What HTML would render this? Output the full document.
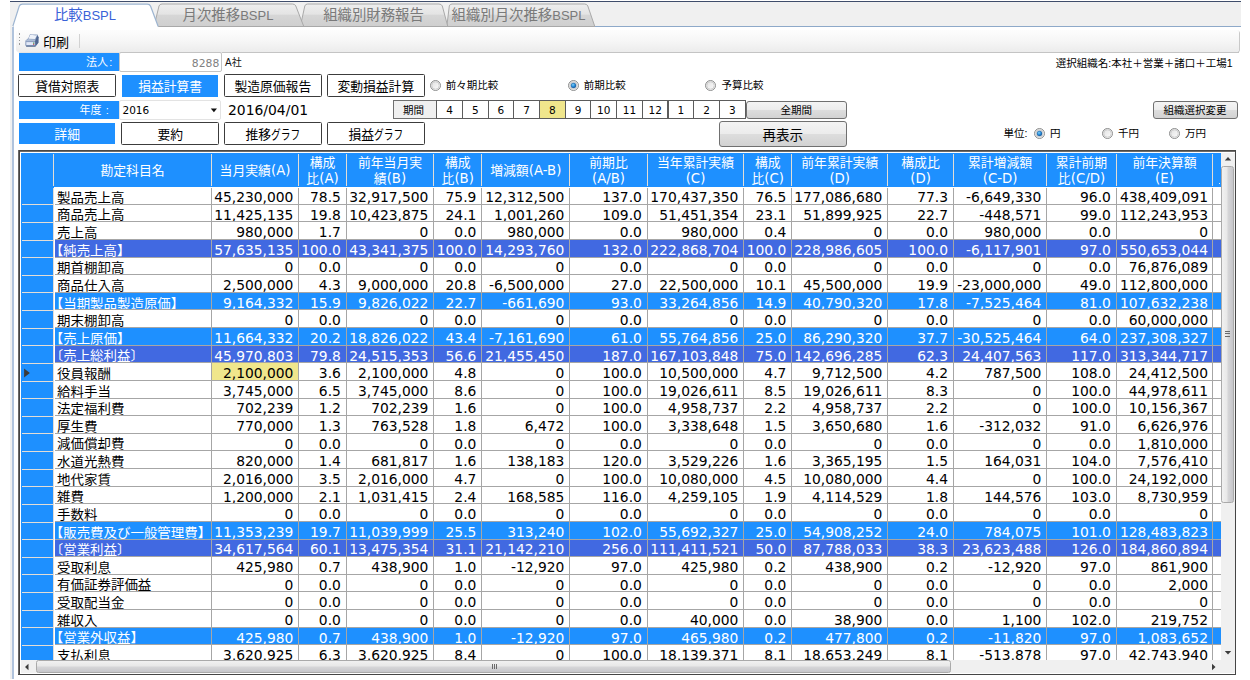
<!DOCTYPE html>
<html lang="ja"><head><meta charset="utf-8"><title>比較BSPL</title>
<style>
html,body{margin:0;padding:0;background:#fff;}
body{width:1250px;height:680px;overflow:hidden;position:relative;font-family:'Liberation Sans','Noto Sans CJK JP',sans-serif;color:#000;}
.a{position:absolute;box-sizing:border-box;}
.c{position:absolute;box-sizing:border-box;display:flex;align-items:center;justify-content:center;white-space:nowrap;}
.tab{font-size:14.4px;color:#7a7a7a;padding-bottom:2px;}
.ka{display:inline-block;transform:scaleX(0.76);transform-origin:0 50%;margin-right:-9.2px;}
.co{display:inline-block;width:0.5em;text-align:center;}
.btn{border:1px solid #3c3c3c;border-radius:1.5px;background:#fff;font-size:12.8px;}
.sel{background:#1e90ff;color:#fff;font-size:12.8px;}
.lbl{background:#1e90ff;color:#fff;font-size:11px;justify-content:flex-end;padding-right:5px;padding-bottom:1.5px;}
.s{font-size:10.5px;}
.wb{border:1px solid #707070;border-radius:3px;background:linear-gradient(#f4f4f4 0%,#ececec 48%,#dddddd 52%,#d2d2d2 100%);}
.rad{position:absolute;width:10px;height:10px;border-radius:50%;box-sizing:border-box;border:1px solid #8e8f8f;background:radial-gradient(circle at 50% 50%,#d8d8d8 0,#f4f4f4 70%);}
.rad.on::after{content:"";position:absolute;left:1.6px;top:1.6px;width:4.8px;height:4.8px;border-radius:50%;background:radial-gradient(circle at 35% 35%,#58b4ea,#10407c);}
.mc{border:1px solid #5c5c5c;background:#fff;font-family:'DejaVu Sans','Noto Sans CJK JP',sans-serif;font-size:10.5px;}
.hd{color:#fff;font-size:12.85px;line-height:16.4px;text-align:center;white-space:nowrap;padding-top:2.6px;}
.rw{position:absolute;left:55px;height:17px;}
.t{position:absolute;top:0;height:100%;box-sizing:border-box;white-space:nowrap;font-size:13.5px;line-height:17.6px;padding-top:1.8px;overflow:hidden;}
.n{font-family:'DejaVu Sans','Noto Sans CJK JP',sans-serif;font-size:13.85px;text-align:right;padding-right:5px;padding-top:2.0px;}
.k{padding-left:3px;font-size:13px;transform:scaleX(1.035);transform-origin:0 0;}
.bo{margin-left:-0.55em;}
.l{font-family:'DejaVu Sans','Noto Sans CJK JP',sans-serif;font-size:13.3px;}
.tl{font-size:13px;}
</style></head><body>

<div class="a" style="left:10px;top:1px;width:1231px;height:1px;background:#3f4d6b"></div>
<div class="a" style="left:10px;top:2px;width:1231px;height:24px;background:#f0f0f0"></div>
<div class="a" style="left:10px;top:26px;width:1231px;height:1px;background:#8ea9c9"></div>
<svg class="a" style="left:0;top:0" width="1250" height="30" viewBox="0 0 1250 30">
<defs><linearGradient id="tg" x1="0" y1="0" x2="0" y2="1"><stop offset="0" stop-color="#eeeeee"/><stop offset="0.45" stop-color="#e4e4e4"/><stop offset="0.5" stop-color="#d6d6d6"/><stop offset="1" stop-color="#cfcfcf"/></linearGradient></defs>
<path d="M446.8 26.5 L449.3 6 Q449.8 4 452 4 L584.5 4 Q587 4 587.8 6 L594.8 26.5 Z" fill="url(#tg)" stroke="#a9a9a9" stroke-width="1"/>
<path d="M300.3 26.5 L304.8 6 Q305.4 4 307.6 4 L439 4 Q441.5 4 442.3 6 L447.8 26.5 Z" fill="url(#tg)" stroke="#a9a9a9" stroke-width="1"/>
<path d="M154 26.5 L159 6 Q159.6 4 162 4 L292.5 4 Q295 4 295.8 6 L303.8 26.5 Z" fill="url(#tg)" stroke="#a9a9a9" stroke-width="1"/>
<path d="M12.9 27.5 L12.9 26 L19.2 6.2 Q20 4.1 22.5 4.1 L147.3 4.1 Q149.8 4.1 150.6 6.2 L158.2 26.5 L158.2 27.5 L12.9 27.5 Z" fill="#ffffff" stroke="none"/>
<path d="M12.9 27.5 L12.9 26 L19.2 6.2 Q20 4.1 22.5 4.1 L147.3 4.1 Q149.8 4.1 150.6 6.2 L158.2 26.5" fill="none" stroke="#9db5d1" stroke-width="1.2"/>
</svg>
<div class="c tab" style="left:20px;top:3px;width:130px;height:23px;color:#3a62d8"><span>比較<span class="tl">BSPL</span></span></div>
<div class="c tab" style="left:160px;top:3px;width:136px;height:23px;"><span>月次推移<span class="tl">BSPL</span></span></div>
<div class="c tab" style="left:306px;top:3px;width:135px;height:23px;">組織別財務報告</div>
<div class="c tab" style="left:450px;top:3px;width:137px;height:23px;">組織別<span>月次推移<span class="tl">BSPL</span></span></div>
<div class="a" style="left:10px;top:26px;width:2.5px;height:653px;background:#f0f0f0"></div>
<div class="a" style="left:12.3px;top:27px;width:1.4px;height:652px;background:#b0c3dc"></div>
<div class="a" style="left:16px;top:30px;width:1222.5px;height:21.8px;border-radius:3px;background:linear-gradient(#fdfdfd 0%,#f6f6f6 50%,#ececec 100%);box-shadow:1px 0.6px 0 #c9c9c9"></div>
<div class="a" style="left:18.8px;top:33.2px;width:1.4px;height:1.4px;background:#9a9a9a"></div>
<div class="a" style="left:18.8px;top:36.6px;width:1.4px;height:1.4px;background:#9a9a9a"></div>
<div class="a" style="left:18.8px;top:40.0px;width:1.4px;height:1.4px;background:#9a9a9a"></div>
<div class="a" style="left:18.8px;top:43.2px;width:1.4px;height:1.4px;background:#9a9a9a"></div>
<svg class="a" style="left:24px;top:33px" width="16" height="15" viewBox="0 0 16 15">
<path d="M1.4 7.8 L4.4 4.9 L6.1 1.1 L13.5 1.5 L14.5 4.2 L14.4 9.8 L11.5 13.4 L2.3 13.4 L1.3 12.3 Z" fill="#8397ba"/>
<path d="M13.3 2.2 L14.5 4.3 L14.4 9.8 L11.6 13.3 L11.2 8.2 Z" fill="#4f6690"/>
<path d="M6.3 1.4 L13.1 1.8 L11.1 6.1 L4.5 5.8 Z" fill="#eef2f9"/>
<path d="M6.9 1.4 L13.1 1.8 L12.4 3.2 Z" fill="#c3cee0"/>
<path d="M1.8 7.6 L4.3 6.1 L11.1 6.4 L10.9 8.3 L1.8 8.3 Z" fill="#aebdd6"/>
<path d="M2.3 9.1 L10.7 9.1 L10.7 12.1 L2.3 12.1 Z" fill="#e1e8f7"/>
<rect x="9.1" y="9.5" width="1.1" height="1.3" fill="#3a9a3a"/><rect x="9.1" y="10.8" width="1.1" height="1.2" fill="#d8526a"/>
<path d="M2.2 13.2 L11.5 13.2" stroke="#43597f" stroke-width="0.8" fill="none"/>
</svg>
<div class="c" style="left:42px;top:33px;width:28px;height:16px;font-size:13px;">印刷</div>
<div class="a" style="left:78.5px;top:34px;width:1px;height:14px;background:#d2d2d2"></div>
<div class="c lbl" style="left:19px;top:52.6px;width:99.5px;height:18.4px;"><span>法人<span class="co">:</span></span></div>
<div class="c s" style="left:119px;top:52px;width:102.5px;height:19.5px;border:1px solid #c4c4c4;border-radius:2px;background:#fff;justify-content:flex-end;padding-right:1.2px;padding-top:3.4px;color:#808080;font-size:10.8px;font-family:'DejaVu Sans','Noto Sans CJK JP',sans-serif">8288</div>
<div class="a" style="left:221.5px;top:52px;width:1017px;height:1px;background:#c4c4c4"></div>
<div class="c s" style="left:225px;top:53px;width:40px;height:17px;justify-content:flex-start;font-size:10px;color:#111">A社</div>
<div class="c s" style="left:1000px;top:53.5px;width:1232.5px;height:17px;width:232.5px;justify-content:flex-end;">選択組織名:本社＋営業＋諸口＋工場1</div>
<div class="c btn" style="left:18.3px;top:74px;width:97.8px;height:23.4px;">貸借対照表</div>
<div class="c sel" style="left:122.3px;top:75px;width:95.7px;height:21.5px;">損益計算書</div>
<div class="c btn" style="left:223.8px;top:74px;width:98px;height:23.4px;">製造原価報告</div>
<div class="c btn" style="left:326.8px;top:74px;width:98px;height:23.4px;">変動損益計算</div>
<svg width="0" height="0" style="position:absolute"><defs><linearGradient id="rb" x1="0" y1="0" x2="1" y2="1"><stop offset="0" stop-color="#dedede"/><stop offset="1" stop-color="#ffffff"/></linearGradient><radialGradient id="rd" cx="0.4" cy="0.35" r="0.7"><stop offset="0" stop-color="#7fd0f8"/><stop offset="0.5" stop-color="#2a90dc"/><stop offset="1" stop-color="#0f4f96"/></radialGradient></defs></svg>
<svg class="a" style="left:428.6px;top:79.0px" width="13" height="13" viewBox="0 0 13 13"><circle cx="6.5" cy="6.5" r="5" fill="url(#rb)" stroke="#8e8f8f" stroke-width="1"/><circle cx="6.5" cy="6.5" r="3.7" fill="none" stroke="#c9c9c9" stroke-width="0.8"/></svg>
<div class="c s" style="left:445.7px;top:77.2px;height:14px;justify-content:flex-start;">前々期比較</div>
<svg class="a" style="left:566.6px;top:79.0px" width="13" height="13" viewBox="0 0 13 13"><circle cx="6.5" cy="6.5" r="5" fill="url(#rb)" stroke="#8e8f8f" stroke-width="1"/><circle cx="6.5" cy="6.5" r="3.7" fill="none" stroke="#c9c9c9" stroke-width="0.8"/><circle cx="6.5" cy="6.5" r="2.5" fill="url(#rd)" stroke="#1c5a96" stroke-width="0.5"/></svg>
<div class="c s" style="left:583.7px;top:77.2px;height:14px;justify-content:flex-start;">前期比較</div>
<svg class="a" style="left:704.4px;top:79.0px" width="13" height="13" viewBox="0 0 13 13"><circle cx="6.5" cy="6.5" r="5" fill="url(#rb)" stroke="#8e8f8f" stroke-width="1"/><circle cx="6.5" cy="6.5" r="3.7" fill="none" stroke="#c9c9c9" stroke-width="0.8"/></svg>
<div class="c s" style="left:721.5px;top:77.2px;height:14px;justify-content:flex-start;">予算比較</div>
<div class="c lbl" style="left:19px;top:100.5px;width:99.5px;height:18.4px;padding-right:8.5px"><span>年度&nbsp;<span class="co">:</span></span></div>
<div class="c s" style="left:119px;top:100px;width:102px;height:20px;border:1px solid #e3e3e3;border-radius:2px;background:#fff;justify-content:flex-start;padding-left:2.5px;font-family:'DejaVu Sans','Noto Sans CJK JP',sans-serif">2016</div>
<svg class="a" style="left:210px;top:108px" width="8" height="5" viewBox="0 0 8 5"><path d="M0.8 0.6 L7 0.6 L3.9 4.2 Z" fill="#111"/></svg>
<div class="c" style="left:228px;top:100.4px;width:84px;height:19px;justify-content:flex-start;font-family:'DejaVu Sans','Noto Sans CJK JP',sans-serif;font-size:13.9px;">2016/04/01</div>
<div class="c s" style="left:393.2px;top:100.4px;width:43.6px;height:18.6px;border:1px solid #707070;background:#f0f0f0;padding-right:2.8px;">期間</div>
<div class="c mc" style="left:436.2px;top:100.2px;width:26.7px;height:18.9px;background:#fff">4</div>
<div class="c mc" style="left:461.9px;top:100.2px;width:26.7px;height:18.9px;background:#fff">5</div>
<div class="c mc" style="left:487.6px;top:100.2px;width:26.7px;height:18.9px;background:#fff">6</div>
<div class="c mc" style="left:513.3px;top:100.2px;width:26.7px;height:18.9px;background:#fff">7</div>
<div class="c mc" style="left:539.0px;top:100.2px;width:26.7px;height:18.9px;background:#f0e68c">8</div>
<div class="c mc" style="left:564.7px;top:100.2px;width:26.7px;height:18.9px;background:#fff">9</div>
<div class="c mc" style="left:590.4px;top:100.2px;width:26.7px;height:18.9px;background:#fff">10</div>
<div class="c mc" style="left:616.1px;top:100.2px;width:26.7px;height:18.9px;background:#fff">11</div>
<div class="c mc" style="left:641.8px;top:100.2px;width:26.7px;height:18.9px;background:#fff">12</div>
<div class="c mc" style="left:667.5px;top:100.2px;width:26.7px;height:18.9px;background:#fff">1</div>
<div class="c mc" style="left:693.2px;top:100.2px;width:26.7px;height:18.9px;background:#fff">2</div>
<div class="c mc" style="left:718.9px;top:100.2px;width:26.7px;height:18.9px;background:#fff">3</div>
<div class="c s wb" style="left:746px;top:101px;width:100.6px;height:17.5px;">全期間</div>
<div class="c s wb" style="left:1152.6px;top:101px;width:85px;height:17.5px;">組織選択変更</div>
<div class="c sel" style="left:19.3px;top:123px;width:95.7px;height:21.3px;">詳細</div>
<div class="c btn" style="left:121.3px;top:122px;width:97.8px;height:23px;">要約</div>
<div class="c btn" style="left:223.8px;top:122px;width:98px;height:23px;"><span>推移<span class="ka">グラフ</span></span></div>
<div class="c btn" style="left:326.8px;top:122px;width:98px;height:23px;"><span>損益<span class="ka">グラフ</span></span></div>
<div class="c wb" style="left:719px;top:120.5px;width:127.6px;height:26px;font-size:13.5px;">再表示</div>
<div class="c s" style="left:1003.5px;top:125.8px;width:26px;height:14px;justify-content:flex-start;">単位:</div>
<svg class="a" style="left:1032.8px;top:126.8px" width="13" height="13" viewBox="0 0 13 13"><circle cx="6.5" cy="6.5" r="5" fill="url(#rb)" stroke="#8e8f8f" stroke-width="1"/><circle cx="6.5" cy="6.5" r="3.7" fill="none" stroke="#c9c9c9" stroke-width="0.8"/><circle cx="6.5" cy="6.5" r="2.5" fill="url(#rd)" stroke="#1c5a96" stroke-width="0.5"/></svg>
<div class="c s" style="left:1049.9px;top:125.0px;height:14px;justify-content:flex-start;">円</div>
<svg class="a" style="left:1100.8px;top:126.8px" width="13" height="13" viewBox="0 0 13 13"><circle cx="6.5" cy="6.5" r="5" fill="url(#rb)" stroke="#8e8f8f" stroke-width="1"/><circle cx="6.5" cy="6.5" r="3.7" fill="none" stroke="#c9c9c9" stroke-width="0.8"/></svg>
<div class="c s" style="left:1117.9px;top:125.0px;height:14px;justify-content:flex-start;">千円</div>
<svg class="a" style="left:1168.0px;top:126.8px" width="13" height="13" viewBox="0 0 13 13"><circle cx="6.5" cy="6.5" r="5" fill="url(#rb)" stroke="#8e8f8f" stroke-width="1"/><circle cx="6.5" cy="6.5" r="3.7" fill="none" stroke="#c9c9c9" stroke-width="0.8"/></svg>
<div class="c s" style="left:1185.1px;top:125.0px;height:14px;justify-content:flex-start;">万円</div>
<div class="a" style="left:18px;top:150px;width:1218px;height:525px;background:#fff"></div>
<div class="a" style="left:18px;top:150px;width:1218px;height:1px;background:#4a4846"></div>
<div class="a" style="left:18px;top:151px;width:1218px;height:1px;background:#6f6d6b"></div>
<div class="a" style="left:18px;top:150px;width:1px;height:525px;background:#6a6866"></div>
<div class="a" style="left:19px;top:150px;width:1px;height:525px;background:#454341"></div>
<div class="a" style="left:1235px;top:150px;width:1px;height:525px;background:#454545"></div>
<div class="a" style="left:18px;top:674px;width:1218px;height:1px;background:#454545"></div>
<div class="a" style="left:21px;top:153px;width:1199.5px;height:34px;background:#1e90ff"></div>
<div class="a" style="left:21px;top:153px;width:33px;height:507px;background:#1e90ff"></div>
<div class="c hd" style="left:54.0px;top:153px;width:157.0px;height:34px;"><div>勘定科目名</div></div>
<div class="c hd" style="left:211.5px;top:153px;width:87.0px;height:34px;"><div>当月実績<span class="l">(A)</span></div></div>
<div class="c hd" style="left:299.0px;top:153px;width:47.0px;height:34px;"><div>構成<br>比<span class="l">(A)</span></div></div>
<div class="c hd" style="left:346.5px;top:153px;width:87.0px;height:34px;"><div>前年当月実<br>績<span class="l">(B)</span></div></div>
<div class="c hd" style="left:434.0px;top:153px;width:47.5px;height:34px;"><div>構成<br>比<span class="l">(B)</span></div></div>
<div class="c hd" style="left:482.0px;top:153px;width:87.5px;height:34px;"><div>増減額<span class="l">(A-B)</span></div></div>
<div class="c hd" style="left:570.0px;top:153px;width:77.0px;height:34px;"><div>前期比<br><span class="l">(A/B)</span></div></div>
<div class="c hd" style="left:647.5px;top:153px;width:96.0px;height:34px;"><div>当年累計実績<br><span class="l">(C)</span></div></div>
<div class="c hd" style="left:744.0px;top:153px;width:47.5px;height:34px;"><div>構成<br>比<span class="l">(C)</span></div></div>
<div class="c hd" style="left:792.0px;top:153px;width:95.5px;height:34px;"><div>前年累計実績<br><span class="l">(D)</span></div></div>
<div class="c hd" style="left:888.0px;top:153px;width:65.1px;height:34px;"><div>構成比<br><span class="l">(D)</span></div></div>
<div class="c hd" style="left:953.6px;top:153px;width:92.9px;height:34px;"><div>累計増減額<br><span class="l">(C-D)</span></div></div>
<div class="c hd" style="left:1047.0px;top:153px;width:69.0px;height:34px;"><div>累計前期<br>比<span class="l">(C/D)</span></div></div>
<div class="c hd" style="left:1116.5px;top:153px;width:96.0px;height:34px;"><div>前年決算額<br><span class="l">(E)</span></div></div>
<div class="a" style="left:53.3px;top:154px;width:1.2px;height:32px;background:#e3ddd6"></div>
<div class="a" style="left:210.8px;top:154px;width:1.2px;height:32px;background:#e3ddd6"></div>
<div class="a" style="left:298.3px;top:154px;width:1.2px;height:32px;background:#e3ddd6"></div>
<div class="a" style="left:345.8px;top:154px;width:1.2px;height:32px;background:#e3ddd6"></div>
<div class="a" style="left:433.3px;top:154px;width:1.2px;height:32px;background:#e3ddd6"></div>
<div class="a" style="left:481.3px;top:154px;width:1.2px;height:32px;background:#e3ddd6"></div>
<div class="a" style="left:569.3px;top:154px;width:1.2px;height:32px;background:#e3ddd6"></div>
<div class="a" style="left:646.8px;top:154px;width:1.2px;height:32px;background:#e3ddd6"></div>
<div class="a" style="left:743.3px;top:154px;width:1.2px;height:32px;background:#e3ddd6"></div>
<div class="a" style="left:791.3px;top:154px;width:1.2px;height:32px;background:#e3ddd6"></div>
<div class="a" style="left:887.3px;top:154px;width:1.2px;height:32px;background:#e3ddd6"></div>
<div class="a" style="left:952.9px;top:154px;width:1.2px;height:32px;background:#e3ddd6"></div>
<div class="a" style="left:1046.3px;top:154px;width:1.2px;height:32px;background:#e3ddd6"></div>
<div class="a" style="left:1115.8px;top:154px;width:1.2px;height:32px;background:#e3ddd6"></div>
<div class="a" style="left:1212.3px;top:154px;width:1.2px;height:32px;background:#e3ddd6"></div>
<div class="rw" style="top:187.00px;width:1165.5px;height:16.74px;background:#fff;color:#000">
<div class="t k" style="left:-0.6px;width:156.5px">製品売上高</div>
<div class="t n" style="left:156.9px;width:86.5px;">45,230,000</div>
<div class="t n" style="left:244.4px;width:46.5px;">78.5</div>
<div class="t n" style="left:291.9px;width:86.5px;">32,917,500</div>
<div class="t n" style="left:379.4px;width:47.0px;">75.9</div>
<div class="t n" style="left:427.4px;width:87.0px;">12,312,500</div>
<div class="t n" style="left:515.4px;width:76.5px;">137.0</div>
<div class="t n" style="left:592.9px;width:95.5px;">170,437,350</div>
<div class="t n" style="left:689.4px;width:47.0px;">76.5</div>
<div class="t n" style="left:737.4px;width:95.0px;">177,086,680</div>
<div class="t n" style="left:833.4px;width:64.6px;">77.3</div>
<div class="t n" style="left:899.0px;width:92.4px;">-6,649,330</div>
<div class="t n" style="left:992.4px;width:68.5px;">96.0</div>
<div class="t n" style="left:1061.9px;width:96.1px;">438,409,091</div>
</div>
<div class="rw" style="top:204.62px;width:1165.5px;height:16.74px;background:#fff;color:#000">
<div class="t k" style="left:-0.6px;width:156.5px">商品売上高</div>
<div class="t n" style="left:156.9px;width:86.5px;">11,425,135</div>
<div class="t n" style="left:244.4px;width:46.5px;">19.8</div>
<div class="t n" style="left:291.9px;width:86.5px;">10,423,875</div>
<div class="t n" style="left:379.4px;width:47.0px;">24.1</div>
<div class="t n" style="left:427.4px;width:87.0px;">1,001,260</div>
<div class="t n" style="left:515.4px;width:76.5px;">109.0</div>
<div class="t n" style="left:592.9px;width:95.5px;">51,451,354</div>
<div class="t n" style="left:689.4px;width:47.0px;">23.1</div>
<div class="t n" style="left:737.4px;width:95.0px;">51,899,925</div>
<div class="t n" style="left:833.4px;width:64.6px;">22.7</div>
<div class="t n" style="left:899.0px;width:92.4px;">-448,571</div>
<div class="t n" style="left:992.4px;width:68.5px;">99.0</div>
<div class="t n" style="left:1061.9px;width:96.1px;">112,243,953</div>
</div>
<div class="rw" style="top:222.24px;width:1165.5px;height:16.74px;background:#fff;color:#000">
<div class="t k" style="left:-0.6px;width:156.5px">売上高</div>
<div class="t n" style="left:156.9px;width:86.5px;">980,000</div>
<div class="t n" style="left:244.4px;width:46.5px;">1.7</div>
<div class="t n" style="left:291.9px;width:86.5px;">0</div>
<div class="t n" style="left:379.4px;width:47.0px;">0.0</div>
<div class="t n" style="left:427.4px;width:87.0px;">980,000</div>
<div class="t n" style="left:515.4px;width:76.5px;">0.0</div>
<div class="t n" style="left:592.9px;width:95.5px;">980,000</div>
<div class="t n" style="left:689.4px;width:47.0px;">0.4</div>
<div class="t n" style="left:737.4px;width:95.0px;">0</div>
<div class="t n" style="left:833.4px;width:64.6px;">0.0</div>
<div class="t n" style="left:899.0px;width:92.4px;">980,000</div>
<div class="t n" style="left:992.4px;width:68.5px;">0.0</div>
<div class="t n" style="left:1061.9px;width:96.1px;">0</div>
</div>
<div class="rw" style="top:239.86px;width:1165.5px;height:16.74px;background:#4169e1;color:#fff">
<div class="t k" style="left:-0.6px;width:156.5px"><span class="bo">【</span>純売上高】</div>
<div class="t n" style="left:156.9px;width:86.5px;">57,635,135</div>
<div class="t n" style="left:244.4px;width:46.5px;">100.0</div>
<div class="t n" style="left:291.9px;width:86.5px;">43,341,375</div>
<div class="t n" style="left:379.4px;width:47.0px;">100.0</div>
<div class="t n" style="left:427.4px;width:87.0px;">14,293,760</div>
<div class="t n" style="left:515.4px;width:76.5px;">132.0</div>
<div class="t n" style="left:592.9px;width:95.5px;">222,868,704</div>
<div class="t n" style="left:689.4px;width:47.0px;">100.0</div>
<div class="t n" style="left:737.4px;width:95.0px;">228,986,605</div>
<div class="t n" style="left:833.4px;width:64.6px;">100.0</div>
<div class="t n" style="left:899.0px;width:92.4px;">-6,117,901</div>
<div class="t n" style="left:992.4px;width:68.5px;">97.0</div>
<div class="t n" style="left:1061.9px;width:96.1px;">550,653,044</div>
</div>
<div class="rw" style="top:257.48px;width:1165.5px;height:16.74px;background:#fff;color:#000">
<div class="t k" style="left:-0.6px;width:156.5px">期首棚卸高</div>
<div class="t n" style="left:156.9px;width:86.5px;">0</div>
<div class="t n" style="left:244.4px;width:46.5px;">0.0</div>
<div class="t n" style="left:291.9px;width:86.5px;">0</div>
<div class="t n" style="left:379.4px;width:47.0px;">0.0</div>
<div class="t n" style="left:427.4px;width:87.0px;">0</div>
<div class="t n" style="left:515.4px;width:76.5px;">0.0</div>
<div class="t n" style="left:592.9px;width:95.5px;">0</div>
<div class="t n" style="left:689.4px;width:47.0px;">0.0</div>
<div class="t n" style="left:737.4px;width:95.0px;">0</div>
<div class="t n" style="left:833.4px;width:64.6px;">0.0</div>
<div class="t n" style="left:899.0px;width:92.4px;">0</div>
<div class="t n" style="left:992.4px;width:68.5px;">0.0</div>
<div class="t n" style="left:1061.9px;width:96.1px;">76,876,089</div>
</div>
<div class="rw" style="top:275.10px;width:1165.5px;height:16.74px;background:#fff;color:#000">
<div class="t k" style="left:-0.6px;width:156.5px">商品仕入高</div>
<div class="t n" style="left:156.9px;width:86.5px;">2,500,000</div>
<div class="t n" style="left:244.4px;width:46.5px;">4.3</div>
<div class="t n" style="left:291.9px;width:86.5px;">9,000,000</div>
<div class="t n" style="left:379.4px;width:47.0px;">20.8</div>
<div class="t n" style="left:427.4px;width:87.0px;">-6,500,000</div>
<div class="t n" style="left:515.4px;width:76.5px;">27.0</div>
<div class="t n" style="left:592.9px;width:95.5px;">22,500,000</div>
<div class="t n" style="left:689.4px;width:47.0px;">10.1</div>
<div class="t n" style="left:737.4px;width:95.0px;">45,500,000</div>
<div class="t n" style="left:833.4px;width:64.6px;">19.9</div>
<div class="t n" style="left:899.0px;width:92.4px;">-23,000,000</div>
<div class="t n" style="left:992.4px;width:68.5px;">49.0</div>
<div class="t n" style="left:1061.9px;width:96.1px;">112,800,000</div>
</div>
<div class="rw" style="top:292.72px;width:1165.5px;height:16.74px;background:#1e90ff;color:#fff">
<div class="t k" style="left:-0.6px;width:156.5px"><span class="bo">【</span>当期製品製造原価】</div>
<div class="t n" style="left:156.9px;width:86.5px;">9,164,332</div>
<div class="t n" style="left:244.4px;width:46.5px;">15.9</div>
<div class="t n" style="left:291.9px;width:86.5px;">9,826,022</div>
<div class="t n" style="left:379.4px;width:47.0px;">22.7</div>
<div class="t n" style="left:427.4px;width:87.0px;">-661,690</div>
<div class="t n" style="left:515.4px;width:76.5px;">93.0</div>
<div class="t n" style="left:592.9px;width:95.5px;">33,264,856</div>
<div class="t n" style="left:689.4px;width:47.0px;">14.9</div>
<div class="t n" style="left:737.4px;width:95.0px;">40,790,320</div>
<div class="t n" style="left:833.4px;width:64.6px;">17.8</div>
<div class="t n" style="left:899.0px;width:92.4px;">-7,525,464</div>
<div class="t n" style="left:992.4px;width:68.5px;">81.0</div>
<div class="t n" style="left:1061.9px;width:96.1px;">107,632,238</div>
</div>
<div class="rw" style="top:310.34px;width:1165.5px;height:16.74px;background:#fff;color:#000">
<div class="t k" style="left:-0.6px;width:156.5px">期末棚卸高</div>
<div class="t n" style="left:156.9px;width:86.5px;">0</div>
<div class="t n" style="left:244.4px;width:46.5px;">0.0</div>
<div class="t n" style="left:291.9px;width:86.5px;">0</div>
<div class="t n" style="left:379.4px;width:47.0px;">0.0</div>
<div class="t n" style="left:427.4px;width:87.0px;">0</div>
<div class="t n" style="left:515.4px;width:76.5px;">0.0</div>
<div class="t n" style="left:592.9px;width:95.5px;">0</div>
<div class="t n" style="left:689.4px;width:47.0px;">0.0</div>
<div class="t n" style="left:737.4px;width:95.0px;">0</div>
<div class="t n" style="left:833.4px;width:64.6px;">0.0</div>
<div class="t n" style="left:899.0px;width:92.4px;">0</div>
<div class="t n" style="left:992.4px;width:68.5px;">0.0</div>
<div class="t n" style="left:1061.9px;width:96.1px;">60,000,000</div>
</div>
<div class="rw" style="top:327.96px;width:1165.5px;height:16.74px;background:#1e90ff;color:#fff">
<div class="t k" style="left:-0.6px;width:156.5px"><span class="bo">【</span>売上原価】</div>
<div class="t n" style="left:156.9px;width:86.5px;">11,664,332</div>
<div class="t n" style="left:244.4px;width:46.5px;">20.2</div>
<div class="t n" style="left:291.9px;width:86.5px;">18,826,022</div>
<div class="t n" style="left:379.4px;width:47.0px;">43.4</div>
<div class="t n" style="left:427.4px;width:87.0px;">-7,161,690</div>
<div class="t n" style="left:515.4px;width:76.5px;">61.0</div>
<div class="t n" style="left:592.9px;width:95.5px;">55,764,856</div>
<div class="t n" style="left:689.4px;width:47.0px;">25.0</div>
<div class="t n" style="left:737.4px;width:95.0px;">86,290,320</div>
<div class="t n" style="left:833.4px;width:64.6px;">37.7</div>
<div class="t n" style="left:899.0px;width:92.4px;">-30,525,464</div>
<div class="t n" style="left:992.4px;width:68.5px;">64.0</div>
<div class="t n" style="left:1061.9px;width:96.1px;">237,308,327</div>
</div>
<div class="rw" style="top:345.58px;width:1165.5px;height:16.74px;background:#4169e1;color:#fff">
<div class="t k" style="left:-0.6px;width:156.5px"><span class="bo">〔</span>売上総利益〕</div>
<div class="t n" style="left:156.9px;width:86.5px;">45,970,803</div>
<div class="t n" style="left:244.4px;width:46.5px;">79.8</div>
<div class="t n" style="left:291.9px;width:86.5px;">24,515,353</div>
<div class="t n" style="left:379.4px;width:47.0px;">56.6</div>
<div class="t n" style="left:427.4px;width:87.0px;">21,455,450</div>
<div class="t n" style="left:515.4px;width:76.5px;">187.0</div>
<div class="t n" style="left:592.9px;width:95.5px;">167,103,848</div>
<div class="t n" style="left:689.4px;width:47.0px;">75.0</div>
<div class="t n" style="left:737.4px;width:95.0px;">142,696,285</div>
<div class="t n" style="left:833.4px;width:64.6px;">62.3</div>
<div class="t n" style="left:899.0px;width:92.4px;">24,407,563</div>
<div class="t n" style="left:992.4px;width:68.5px;">117.0</div>
<div class="t n" style="left:1061.9px;width:96.1px;">313,344,717</div>
</div>
<div class="rw" style="top:363.20px;width:1165.5px;height:16.74px;background:#fff;color:#000">
<div class="t k" style="left:-0.6px;width:156.5px">役員報酬</div>
<div class="t n" style="left:156.9px;width:86.5px;background:#f0e68c;">2,100,000</div>
<div class="t n" style="left:244.4px;width:46.5px;">3.6</div>
<div class="t n" style="left:291.9px;width:86.5px;">2,100,000</div>
<div class="t n" style="left:379.4px;width:47.0px;">4.8</div>
<div class="t n" style="left:427.4px;width:87.0px;">0</div>
<div class="t n" style="left:515.4px;width:76.5px;">100.0</div>
<div class="t n" style="left:592.9px;width:95.5px;">10,500,000</div>
<div class="t n" style="left:689.4px;width:47.0px;">4.7</div>
<div class="t n" style="left:737.4px;width:95.0px;">9,712,500</div>
<div class="t n" style="left:833.4px;width:64.6px;">4.2</div>
<div class="t n" style="left:899.0px;width:92.4px;">787,500</div>
<div class="t n" style="left:992.4px;width:68.5px;">108.0</div>
<div class="t n" style="left:1061.9px;width:96.1px;">24,412,500</div>
</div>
<div class="rw" style="top:380.82px;width:1165.5px;height:16.74px;background:#fff;color:#000">
<div class="t k" style="left:-0.6px;width:156.5px">給料手当</div>
<div class="t n" style="left:156.9px;width:86.5px;">3,745,000</div>
<div class="t n" style="left:244.4px;width:46.5px;">6.5</div>
<div class="t n" style="left:291.9px;width:86.5px;">3,745,000</div>
<div class="t n" style="left:379.4px;width:47.0px;">8.6</div>
<div class="t n" style="left:427.4px;width:87.0px;">0</div>
<div class="t n" style="left:515.4px;width:76.5px;">100.0</div>
<div class="t n" style="left:592.9px;width:95.5px;">19,026,611</div>
<div class="t n" style="left:689.4px;width:47.0px;">8.5</div>
<div class="t n" style="left:737.4px;width:95.0px;">19,026,611</div>
<div class="t n" style="left:833.4px;width:64.6px;">8.3</div>
<div class="t n" style="left:899.0px;width:92.4px;">0</div>
<div class="t n" style="left:992.4px;width:68.5px;">100.0</div>
<div class="t n" style="left:1061.9px;width:96.1px;">44,978,611</div>
</div>
<div class="rw" style="top:398.44px;width:1165.5px;height:16.74px;background:#fff;color:#000">
<div class="t k" style="left:-0.6px;width:156.5px">法定福利費</div>
<div class="t n" style="left:156.9px;width:86.5px;">702,239</div>
<div class="t n" style="left:244.4px;width:46.5px;">1.2</div>
<div class="t n" style="left:291.9px;width:86.5px;">702,239</div>
<div class="t n" style="left:379.4px;width:47.0px;">1.6</div>
<div class="t n" style="left:427.4px;width:87.0px;">0</div>
<div class="t n" style="left:515.4px;width:76.5px;">100.0</div>
<div class="t n" style="left:592.9px;width:95.5px;">4,958,737</div>
<div class="t n" style="left:689.4px;width:47.0px;">2.2</div>
<div class="t n" style="left:737.4px;width:95.0px;">4,958,737</div>
<div class="t n" style="left:833.4px;width:64.6px;">2.2</div>
<div class="t n" style="left:899.0px;width:92.4px;">0</div>
<div class="t n" style="left:992.4px;width:68.5px;">100.0</div>
<div class="t n" style="left:1061.9px;width:96.1px;">10,156,367</div>
</div>
<div class="rw" style="top:416.06px;width:1165.5px;height:16.74px;background:#fff;color:#000">
<div class="t k" style="left:-0.6px;width:156.5px">厚生費</div>
<div class="t n" style="left:156.9px;width:86.5px;">770,000</div>
<div class="t n" style="left:244.4px;width:46.5px;">1.3</div>
<div class="t n" style="left:291.9px;width:86.5px;">763,528</div>
<div class="t n" style="left:379.4px;width:47.0px;">1.8</div>
<div class="t n" style="left:427.4px;width:87.0px;">6,472</div>
<div class="t n" style="left:515.4px;width:76.5px;">100.0</div>
<div class="t n" style="left:592.9px;width:95.5px;">3,338,648</div>
<div class="t n" style="left:689.4px;width:47.0px;">1.5</div>
<div class="t n" style="left:737.4px;width:95.0px;">3,650,680</div>
<div class="t n" style="left:833.4px;width:64.6px;">1.6</div>
<div class="t n" style="left:899.0px;width:92.4px;">-312,032</div>
<div class="t n" style="left:992.4px;width:68.5px;">91.0</div>
<div class="t n" style="left:1061.9px;width:96.1px;">6,626,976</div>
</div>
<div class="rw" style="top:433.68px;width:1165.5px;height:16.74px;background:#fff;color:#000">
<div class="t k" style="left:-0.6px;width:156.5px">減価償却費</div>
<div class="t n" style="left:156.9px;width:86.5px;">0</div>
<div class="t n" style="left:244.4px;width:46.5px;">0.0</div>
<div class="t n" style="left:291.9px;width:86.5px;">0</div>
<div class="t n" style="left:379.4px;width:47.0px;">0.0</div>
<div class="t n" style="left:427.4px;width:87.0px;">0</div>
<div class="t n" style="left:515.4px;width:76.5px;">0.0</div>
<div class="t n" style="left:592.9px;width:95.5px;">0</div>
<div class="t n" style="left:689.4px;width:47.0px;">0.0</div>
<div class="t n" style="left:737.4px;width:95.0px;">0</div>
<div class="t n" style="left:833.4px;width:64.6px;">0.0</div>
<div class="t n" style="left:899.0px;width:92.4px;">0</div>
<div class="t n" style="left:992.4px;width:68.5px;">0.0</div>
<div class="t n" style="left:1061.9px;width:96.1px;">1,810,000</div>
</div>
<div class="rw" style="top:451.30px;width:1165.5px;height:16.74px;background:#fff;color:#000">
<div class="t k" style="left:-0.6px;width:156.5px">水道光熱費</div>
<div class="t n" style="left:156.9px;width:86.5px;">820,000</div>
<div class="t n" style="left:244.4px;width:46.5px;">1.4</div>
<div class="t n" style="left:291.9px;width:86.5px;">681,817</div>
<div class="t n" style="left:379.4px;width:47.0px;">1.6</div>
<div class="t n" style="left:427.4px;width:87.0px;">138,183</div>
<div class="t n" style="left:515.4px;width:76.5px;">120.0</div>
<div class="t n" style="left:592.9px;width:95.5px;">3,529,226</div>
<div class="t n" style="left:689.4px;width:47.0px;">1.6</div>
<div class="t n" style="left:737.4px;width:95.0px;">3,365,195</div>
<div class="t n" style="left:833.4px;width:64.6px;">1.5</div>
<div class="t n" style="left:899.0px;width:92.4px;">164,031</div>
<div class="t n" style="left:992.4px;width:68.5px;">104.0</div>
<div class="t n" style="left:1061.9px;width:96.1px;">7,576,410</div>
</div>
<div class="rw" style="top:468.92px;width:1165.5px;height:16.74px;background:#fff;color:#000">
<div class="t k" style="left:-0.6px;width:156.5px">地代家賃</div>
<div class="t n" style="left:156.9px;width:86.5px;">2,016,000</div>
<div class="t n" style="left:244.4px;width:46.5px;">3.5</div>
<div class="t n" style="left:291.9px;width:86.5px;">2,016,000</div>
<div class="t n" style="left:379.4px;width:47.0px;">4.7</div>
<div class="t n" style="left:427.4px;width:87.0px;">0</div>
<div class="t n" style="left:515.4px;width:76.5px;">100.0</div>
<div class="t n" style="left:592.9px;width:95.5px;">10,080,000</div>
<div class="t n" style="left:689.4px;width:47.0px;">4.5</div>
<div class="t n" style="left:737.4px;width:95.0px;">10,080,000</div>
<div class="t n" style="left:833.4px;width:64.6px;">4.4</div>
<div class="t n" style="left:899.0px;width:92.4px;">0</div>
<div class="t n" style="left:992.4px;width:68.5px;">100.0</div>
<div class="t n" style="left:1061.9px;width:96.1px;">24,192,000</div>
</div>
<div class="rw" style="top:486.54px;width:1165.5px;height:16.74px;background:#fff;color:#000">
<div class="t k" style="left:-0.6px;width:156.5px">雑費</div>
<div class="t n" style="left:156.9px;width:86.5px;">1,200,000</div>
<div class="t n" style="left:244.4px;width:46.5px;">2.1</div>
<div class="t n" style="left:291.9px;width:86.5px;">1,031,415</div>
<div class="t n" style="left:379.4px;width:47.0px;">2.4</div>
<div class="t n" style="left:427.4px;width:87.0px;">168,585</div>
<div class="t n" style="left:515.4px;width:76.5px;">116.0</div>
<div class="t n" style="left:592.9px;width:95.5px;">4,259,105</div>
<div class="t n" style="left:689.4px;width:47.0px;">1.9</div>
<div class="t n" style="left:737.4px;width:95.0px;">4,114,529</div>
<div class="t n" style="left:833.4px;width:64.6px;">1.8</div>
<div class="t n" style="left:899.0px;width:92.4px;">144,576</div>
<div class="t n" style="left:992.4px;width:68.5px;">103.0</div>
<div class="t n" style="left:1061.9px;width:96.1px;">8,730,959</div>
</div>
<div class="rw" style="top:504.16px;width:1165.5px;height:16.74px;background:#fff;color:#000">
<div class="t k" style="left:-0.6px;width:156.5px">手数料</div>
<div class="t n" style="left:156.9px;width:86.5px;">0</div>
<div class="t n" style="left:244.4px;width:46.5px;">0.0</div>
<div class="t n" style="left:291.9px;width:86.5px;">0</div>
<div class="t n" style="left:379.4px;width:47.0px;">0.0</div>
<div class="t n" style="left:427.4px;width:87.0px;">0</div>
<div class="t n" style="left:515.4px;width:76.5px;">0.0</div>
<div class="t n" style="left:592.9px;width:95.5px;">0</div>
<div class="t n" style="left:689.4px;width:47.0px;">0.0</div>
<div class="t n" style="left:737.4px;width:95.0px;">0</div>
<div class="t n" style="left:833.4px;width:64.6px;">0.0</div>
<div class="t n" style="left:899.0px;width:92.4px;">0</div>
<div class="t n" style="left:992.4px;width:68.5px;">0.0</div>
<div class="t n" style="left:1061.9px;width:96.1px;">0</div>
</div>
<div class="rw" style="top:521.78px;width:1165.5px;height:16.74px;background:#1e90ff;color:#fff">
<div class="t k" style="left:-0.6px;width:156.5px"><span class="bo">【</span>販売費及び一般管理費】</div>
<div class="t n" style="left:156.9px;width:86.5px;">11,353,239</div>
<div class="t n" style="left:244.4px;width:46.5px;">19.7</div>
<div class="t n" style="left:291.9px;width:86.5px;">11,039,999</div>
<div class="t n" style="left:379.4px;width:47.0px;">25.5</div>
<div class="t n" style="left:427.4px;width:87.0px;">313,240</div>
<div class="t n" style="left:515.4px;width:76.5px;">102.0</div>
<div class="t n" style="left:592.9px;width:95.5px;">55,692,327</div>
<div class="t n" style="left:689.4px;width:47.0px;">25.0</div>
<div class="t n" style="left:737.4px;width:95.0px;">54,908,252</div>
<div class="t n" style="left:833.4px;width:64.6px;">24.0</div>
<div class="t n" style="left:899.0px;width:92.4px;">784,075</div>
<div class="t n" style="left:992.4px;width:68.5px;">101.0</div>
<div class="t n" style="left:1061.9px;width:96.1px;">128,483,823</div>
</div>
<div class="rw" style="top:539.40px;width:1165.5px;height:16.74px;background:#4169e1;color:#fff">
<div class="t k" style="left:-0.6px;width:156.5px"><span class="bo">〔</span>営業利益〕</div>
<div class="t n" style="left:156.9px;width:86.5px;">34,617,564</div>
<div class="t n" style="left:244.4px;width:46.5px;">60.1</div>
<div class="t n" style="left:291.9px;width:86.5px;">13,475,354</div>
<div class="t n" style="left:379.4px;width:47.0px;">31.1</div>
<div class="t n" style="left:427.4px;width:87.0px;">21,142,210</div>
<div class="t n" style="left:515.4px;width:76.5px;">256.0</div>
<div class="t n" style="left:592.9px;width:95.5px;">111,411,521</div>
<div class="t n" style="left:689.4px;width:47.0px;">50.0</div>
<div class="t n" style="left:737.4px;width:95.0px;">87,788,033</div>
<div class="t n" style="left:833.4px;width:64.6px;">38.3</div>
<div class="t n" style="left:899.0px;width:92.4px;">23,623,488</div>
<div class="t n" style="left:992.4px;width:68.5px;">126.0</div>
<div class="t n" style="left:1061.9px;width:96.1px;">184,860,894</div>
</div>
<div class="rw" style="top:557.02px;width:1165.5px;height:16.74px;background:#fff;color:#000">
<div class="t k" style="left:-0.6px;width:156.5px">受取利息</div>
<div class="t n" style="left:156.9px;width:86.5px;">425,980</div>
<div class="t n" style="left:244.4px;width:46.5px;">0.7</div>
<div class="t n" style="left:291.9px;width:86.5px;">438,900</div>
<div class="t n" style="left:379.4px;width:47.0px;">1.0</div>
<div class="t n" style="left:427.4px;width:87.0px;">-12,920</div>
<div class="t n" style="left:515.4px;width:76.5px;">97.0</div>
<div class="t n" style="left:592.9px;width:95.5px;">425,980</div>
<div class="t n" style="left:689.4px;width:47.0px;">0.2</div>
<div class="t n" style="left:737.4px;width:95.0px;">438,900</div>
<div class="t n" style="left:833.4px;width:64.6px;">0.2</div>
<div class="t n" style="left:899.0px;width:92.4px;">-12,920</div>
<div class="t n" style="left:992.4px;width:68.5px;">97.0</div>
<div class="t n" style="left:1061.9px;width:96.1px;">861,900</div>
</div>
<div class="rw" style="top:574.64px;width:1165.5px;height:16.74px;background:#fff;color:#000">
<div class="t k" style="left:-0.6px;width:156.5px">有価証券評価益</div>
<div class="t n" style="left:156.9px;width:86.5px;">0</div>
<div class="t n" style="left:244.4px;width:46.5px;">0.0</div>
<div class="t n" style="left:291.9px;width:86.5px;">0</div>
<div class="t n" style="left:379.4px;width:47.0px;">0.0</div>
<div class="t n" style="left:427.4px;width:87.0px;">0</div>
<div class="t n" style="left:515.4px;width:76.5px;">0.0</div>
<div class="t n" style="left:592.9px;width:95.5px;">0</div>
<div class="t n" style="left:689.4px;width:47.0px;">0.0</div>
<div class="t n" style="left:737.4px;width:95.0px;">0</div>
<div class="t n" style="left:833.4px;width:64.6px;">0.0</div>
<div class="t n" style="left:899.0px;width:92.4px;">0</div>
<div class="t n" style="left:992.4px;width:68.5px;">0.0</div>
<div class="t n" style="left:1061.9px;width:96.1px;">2,000</div>
</div>
<div class="rw" style="top:592.26px;width:1165.5px;height:16.74px;background:#fff;color:#000">
<div class="t k" style="left:-0.6px;width:156.5px">受取配当金</div>
<div class="t n" style="left:156.9px;width:86.5px;">0</div>
<div class="t n" style="left:244.4px;width:46.5px;">0.0</div>
<div class="t n" style="left:291.9px;width:86.5px;">0</div>
<div class="t n" style="left:379.4px;width:47.0px;">0.0</div>
<div class="t n" style="left:427.4px;width:87.0px;">0</div>
<div class="t n" style="left:515.4px;width:76.5px;">0.0</div>
<div class="t n" style="left:592.9px;width:95.5px;">0</div>
<div class="t n" style="left:689.4px;width:47.0px;">0.0</div>
<div class="t n" style="left:737.4px;width:95.0px;">0</div>
<div class="t n" style="left:833.4px;width:64.6px;">0.0</div>
<div class="t n" style="left:899.0px;width:92.4px;">0</div>
<div class="t n" style="left:992.4px;width:68.5px;">0.0</div>
<div class="t n" style="left:1061.9px;width:96.1px;">0</div>
</div>
<div class="rw" style="top:609.88px;width:1165.5px;height:16.74px;background:#fff;color:#000">
<div class="t k" style="left:-0.6px;width:156.5px">雑収入</div>
<div class="t n" style="left:156.9px;width:86.5px;">0</div>
<div class="t n" style="left:244.4px;width:46.5px;">0.0</div>
<div class="t n" style="left:291.9px;width:86.5px;">0</div>
<div class="t n" style="left:379.4px;width:47.0px;">0.0</div>
<div class="t n" style="left:427.4px;width:87.0px;">0</div>
<div class="t n" style="left:515.4px;width:76.5px;">0.0</div>
<div class="t n" style="left:592.9px;width:95.5px;">40,000</div>
<div class="t n" style="left:689.4px;width:47.0px;">0.0</div>
<div class="t n" style="left:737.4px;width:95.0px;">38,900</div>
<div class="t n" style="left:833.4px;width:64.6px;">0.0</div>
<div class="t n" style="left:899.0px;width:92.4px;">1,100</div>
<div class="t n" style="left:992.4px;width:68.5px;">102.0</div>
<div class="t n" style="left:1061.9px;width:96.1px;">219,752</div>
</div>
<div class="rw" style="top:627.50px;width:1165.5px;height:16.74px;background:#1e90ff;color:#fff">
<div class="t k" style="left:-0.6px;width:156.5px"><span class="bo">【</span>営業外収益】</div>
<div class="t n" style="left:156.9px;width:86.5px;">425,980</div>
<div class="t n" style="left:244.4px;width:46.5px;">0.7</div>
<div class="t n" style="left:291.9px;width:86.5px;">438,900</div>
<div class="t n" style="left:379.4px;width:47.0px;">1.0</div>
<div class="t n" style="left:427.4px;width:87.0px;">-12,920</div>
<div class="t n" style="left:515.4px;width:76.5px;">97.0</div>
<div class="t n" style="left:592.9px;width:95.5px;">465,980</div>
<div class="t n" style="left:689.4px;width:47.0px;">0.2</div>
<div class="t n" style="left:737.4px;width:95.0px;">477,800</div>
<div class="t n" style="left:833.4px;width:64.6px;">0.2</div>
<div class="t n" style="left:899.0px;width:92.4px;">-11,820</div>
<div class="t n" style="left:992.4px;width:68.5px;">97.0</div>
<div class="t n" style="left:1061.9px;width:96.1px;">1,083,652</div>
</div>
<div class="rw" style="top:645.12px;width:1165.5px;height:14.68px;background:#fff;color:#000">
<div class="t k" style="left:-0.6px;width:156.5px">支払利息</div>
<div class="t n" style="left:156.9px;width:86.5px;">3,620,925</div>
<div class="t n" style="left:244.4px;width:46.5px;">6.3</div>
<div class="t n" style="left:291.9px;width:86.5px;">3,620,925</div>
<div class="t n" style="left:379.4px;width:47.0px;">8.4</div>
<div class="t n" style="left:427.4px;width:87.0px;">0</div>
<div class="t n" style="left:515.4px;width:76.5px;">100.0</div>
<div class="t n" style="left:592.9px;width:95.5px;">18,139,371</div>
<div class="t n" style="left:689.4px;width:47.0px;">8.1</div>
<div class="t n" style="left:737.4px;width:95.0px;">18,653,249</div>
<div class="t n" style="left:833.4px;width:64.6px;">8.1</div>
<div class="t n" style="left:899.0px;width:92.4px;">-513,878</div>
<div class="t n" style="left:992.4px;width:68.5px;">97.0</div>
<div class="t n" style="left:1061.9px;width:96.1px;">42,743,940</div>
</div>
<div class="a" style="left:55px;top:203.74px;width:1165.5px;height:1px;background:#a6a6a6"></div>
<div class="a" style="left:22px;top:204.34px;width:30.8px;height:1px;background:#e4ddd6"></div>
<div class="a" style="left:55px;top:221.36px;width:1165.5px;height:1px;background:#a6a6a6"></div>
<div class="a" style="left:22px;top:221.96px;width:30.8px;height:1px;background:#e4ddd6"></div>
<div class="a" style="left:55px;top:238.98px;width:1165.5px;height:1px;background:#a6a6a6"></div>
<div class="a" style="left:22px;top:239.58px;width:30.8px;height:1px;background:#e4ddd6"></div>
<div class="a" style="left:55px;top:256.60px;width:1165.5px;height:1px;background:#a6a6a6"></div>
<div class="a" style="left:22px;top:257.20px;width:30.8px;height:1px;background:#e4ddd6"></div>
<div class="a" style="left:55px;top:274.22px;width:1165.5px;height:1px;background:#a6a6a6"></div>
<div class="a" style="left:22px;top:274.82px;width:30.8px;height:1px;background:#e4ddd6"></div>
<div class="a" style="left:55px;top:291.84px;width:1165.5px;height:1px;background:#a6a6a6"></div>
<div class="a" style="left:22px;top:292.44px;width:30.8px;height:1px;background:#e4ddd6"></div>
<div class="a" style="left:55px;top:309.46px;width:1165.5px;height:1px;background:#a6a6a6"></div>
<div class="a" style="left:22px;top:310.06px;width:30.8px;height:1px;background:#e4ddd6"></div>
<div class="a" style="left:55px;top:327.08px;width:1165.5px;height:1px;background:#a6a6a6"></div>
<div class="a" style="left:22px;top:327.68px;width:30.8px;height:1px;background:#e4ddd6"></div>
<div class="a" style="left:55px;top:344.70px;width:1165.5px;height:1px;background:#a6a6a6"></div>
<div class="a" style="left:22px;top:345.30px;width:30.8px;height:1px;background:#e4ddd6"></div>
<div class="a" style="left:55px;top:362.32px;width:1165.5px;height:1px;background:#a6a6a6"></div>
<div class="a" style="left:22px;top:362.92px;width:30.8px;height:1px;background:#e4ddd6"></div>
<div class="a" style="left:55px;top:379.94px;width:1165.5px;height:1px;background:#a6a6a6"></div>
<div class="a" style="left:22px;top:380.54px;width:30.8px;height:1px;background:#e4ddd6"></div>
<div class="a" style="left:55px;top:397.56px;width:1165.5px;height:1px;background:#a6a6a6"></div>
<div class="a" style="left:22px;top:398.16px;width:30.8px;height:1px;background:#e4ddd6"></div>
<div class="a" style="left:55px;top:415.18px;width:1165.5px;height:1px;background:#a6a6a6"></div>
<div class="a" style="left:22px;top:415.78px;width:30.8px;height:1px;background:#e4ddd6"></div>
<div class="a" style="left:55px;top:432.80px;width:1165.5px;height:1px;background:#a6a6a6"></div>
<div class="a" style="left:22px;top:433.40px;width:30.8px;height:1px;background:#e4ddd6"></div>
<div class="a" style="left:55px;top:450.42px;width:1165.5px;height:1px;background:#a6a6a6"></div>
<div class="a" style="left:22px;top:451.02px;width:30.8px;height:1px;background:#e4ddd6"></div>
<div class="a" style="left:55px;top:468.04px;width:1165.5px;height:1px;background:#a6a6a6"></div>
<div class="a" style="left:22px;top:468.64px;width:30.8px;height:1px;background:#e4ddd6"></div>
<div class="a" style="left:55px;top:485.66px;width:1165.5px;height:1px;background:#a6a6a6"></div>
<div class="a" style="left:22px;top:486.26px;width:30.8px;height:1px;background:#e4ddd6"></div>
<div class="a" style="left:55px;top:503.28px;width:1165.5px;height:1px;background:#a6a6a6"></div>
<div class="a" style="left:22px;top:503.88px;width:30.8px;height:1px;background:#e4ddd6"></div>
<div class="a" style="left:55px;top:520.90px;width:1165.5px;height:1px;background:#a6a6a6"></div>
<div class="a" style="left:22px;top:521.50px;width:30.8px;height:1px;background:#e4ddd6"></div>
<div class="a" style="left:55px;top:538.52px;width:1165.5px;height:1px;background:#a6a6a6"></div>
<div class="a" style="left:22px;top:539.12px;width:30.8px;height:1px;background:#e4ddd6"></div>
<div class="a" style="left:55px;top:556.14px;width:1165.5px;height:1px;background:#a6a6a6"></div>
<div class="a" style="left:22px;top:556.74px;width:30.8px;height:1px;background:#e4ddd6"></div>
<div class="a" style="left:55px;top:573.76px;width:1165.5px;height:1px;background:#a6a6a6"></div>
<div class="a" style="left:22px;top:574.36px;width:30.8px;height:1px;background:#e4ddd6"></div>
<div class="a" style="left:55px;top:591.38px;width:1165.5px;height:1px;background:#a6a6a6"></div>
<div class="a" style="left:22px;top:591.98px;width:30.8px;height:1px;background:#e4ddd6"></div>
<div class="a" style="left:55px;top:609.00px;width:1165.5px;height:1px;background:#a6a6a6"></div>
<div class="a" style="left:22px;top:609.60px;width:30.8px;height:1px;background:#e4ddd6"></div>
<div class="a" style="left:55px;top:626.62px;width:1165.5px;height:1px;background:#a6a6a6"></div>
<div class="a" style="left:22px;top:627.22px;width:30.8px;height:1px;background:#e4ddd6"></div>
<div class="a" style="left:55px;top:644.24px;width:1165.5px;height:1px;background:#a6a6a6"></div>
<div class="a" style="left:22px;top:644.84px;width:30.8px;height:1px;background:#e4ddd6"></div>
<div class="a" style="left:53.3px;top:188px;width:1.1px;height:472px;background:#e3ddd6"></div>
<div class="a" style="left:210.8px;top:188px;width:1.1px;height:472px;background:#a6a6a6"></div>
<div class="a" style="left:298.3px;top:188px;width:1.1px;height:472px;background:#a6a6a6"></div>
<div class="a" style="left:345.8px;top:188px;width:1.1px;height:472px;background:#a6a6a6"></div>
<div class="a" style="left:433.3px;top:188px;width:1.1px;height:472px;background:#a6a6a6"></div>
<div class="a" style="left:481.3px;top:188px;width:1.1px;height:472px;background:#a6a6a6"></div>
<div class="a" style="left:569.3px;top:188px;width:1.1px;height:472px;background:#a6a6a6"></div>
<div class="a" style="left:646.8px;top:188px;width:1.1px;height:472px;background:#a6a6a6"></div>
<div class="a" style="left:743.3px;top:188px;width:1.1px;height:472px;background:#a6a6a6"></div>
<div class="a" style="left:791.3px;top:188px;width:1.1px;height:472px;background:#a6a6a6"></div>
<div class="a" style="left:887.3px;top:188px;width:1.1px;height:472px;background:#a6a6a6"></div>
<div class="a" style="left:952.9px;top:188px;width:1.1px;height:472px;background:#a6a6a6"></div>
<div class="a" style="left:1046.3px;top:188px;width:1.1px;height:472px;background:#a6a6a6"></div>
<div class="a" style="left:1115.8px;top:188px;width:1.1px;height:472px;background:#a6a6a6"></div>
<div class="a" style="left:1212.3px;top:188px;width:1.1px;height:472px;background:#a6a6a6"></div>
<svg class="a" style="left:23px;top:366.5px" width="9" height="12" viewBox="0 0 9 12"><path d="M1.1 1.4 L6.9 6 L1.1 10.6 Z" fill="#3a3a3a"/></svg>
<div class="a" style="left:1219.2px;top:183px;width:1.3px;height:1px;background:#dfeeff"></div>
<div class="a" style="left:1220.5px;top:152.5px;width:14.2px;height:507.5px;background:#f0f0f0"></div>
<div class="a" style="left:1221.4px;top:166px;width:12.6px;height:336.6px;border:1px solid #aaaaaa;border-radius:2.5px;background:linear-gradient(90deg,#f1f1f1 0%,#e8e8e8 45%,#d6d6d8 55%,#c6c6ca 100%)"></div>
<svg class="a" style="left:1224.3px;top:156px" width="8" height="6" viewBox="0 0 8 6"><path d="M0.8 4.4 L4 0.9 L7.2 4.4 Z" fill="#3c3c3c"/></svg>
<svg class="a" style="left:1224.3px;top:650.2px" width="8" height="6" viewBox="0 0 8 6"><path d="M0.8 1 L7.2 1 L4 4.5 Z" fill="#3c3c3c"/></svg>
<div class="a" style="left:1224.8px;top:330.9px;width:5.4px;height:1px;background:#6a6a6a"></div>
<div class="a" style="left:1224.8px;top:333.3px;width:5.4px;height:1px;background:#6a6a6a"></div>
<div class="a" style="left:1224.8px;top:335.7px;width:5.4px;height:1px;background:#6a6a6a"></div>
<div class="a" style="left:20.5px;top:660px;width:1214.2px;height:13.4px;background:#f0f0f0"></div>
<div class="a" style="left:36px;top:660.4px;width:915px;height:12.2px;border:1px solid #aaaaaa;border-radius:2.5px;background:linear-gradient(#f1f1f1 0%,#e8e8e8 45%,#d6d6d8 55%,#c6c6ca 100%)"></div>
<svg class="a" style="left:24px;top:662.8px" width="6" height="8" viewBox="0 0 6 8"><path d="M4.5 0.8 L1 4 L4.5 7.2 Z" fill="#3c3c3c"/></svg>
<svg class="a" style="left:1211px;top:662.8px" width="6" height="8" viewBox="0 0 6 8"><path d="M1 0.8 L4.5 4 L1 7.2 Z" fill="#3c3c3c"/></svg>
<div class="a" style="left:491.6px;top:664px;width:1px;height:5.4px;background:#6a6a6a"></div>
<div class="a" style="left:494.0px;top:664px;width:1px;height:5.4px;background:#6a6a6a"></div>
<div class="a" style="left:496.4px;top:664px;width:1px;height:5.4px;background:#6a6a6a"></div>
</body></html>
